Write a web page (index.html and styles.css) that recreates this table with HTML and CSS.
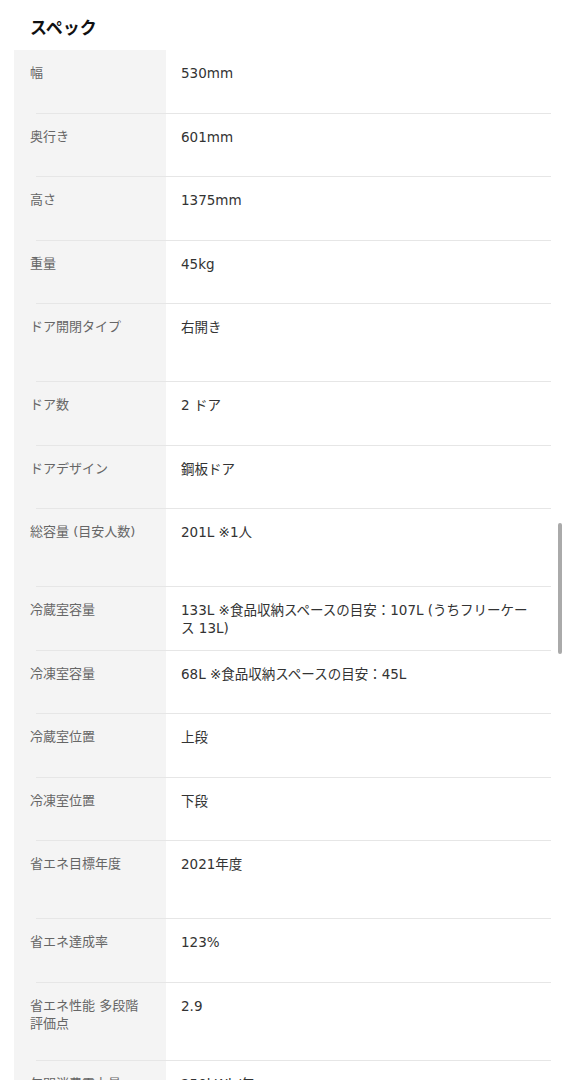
FILE: index.html
```html
<!DOCTYPE html>
<html lang="ja">
<head>
  <meta charset="UTF-8">
  <meta name="viewport" content="width=device-width, initial-scale=1.0">
  <title>スペック</title>
  <link rel="stylesheet" href="styles.css">
</head>
<body>
  <section class="spec">
    <h2 class="spec-title">スペック</h2>

    <div class="spec-list">
      <div class="spec-row">
        <div class="spec-label">幅</div>
        <div class="spec-value">530mm</div>
      </div>
      <div class="spec-row">
        <div class="spec-label">奥行き</div>
        <div class="spec-value">601mm</div>
      </div>
      <div class="spec-row">
        <div class="spec-label">高さ</div>
        <div class="spec-value">1375mm</div>
      </div>
      <div class="spec-row">
        <div class="spec-label">重量</div>
        <div class="spec-value">45kg</div>
      </div>
      <div class="spec-row tall">
        <div class="spec-label">ドア開閉タイプ</div>
        <div class="spec-value">右開き</div>
      </div>
      <div class="spec-row">
        <div class="spec-label">ドア数</div>
        <div class="spec-value">2 ドア</div>
      </div>
      <div class="spec-row">
        <div class="spec-label">ドアデザイン</div>
        <div class="spec-value">鋼板ドア</div>
      </div>
      <div class="spec-row tall">
        <div class="spec-label">総容量 (目安人数)</div>
        <div class="spec-value">201L ※1人</div>
      </div>
      <div class="spec-row">
        <div class="spec-label">冷蔵室容量</div>
        <div class="spec-value">133L ※食品収納スペースの目安：107L (うちフリーケース 13L)</div>
      </div>
      <div class="spec-row">
        <div class="spec-label">冷凍室容量</div>
        <div class="spec-value">68L ※食品収納スペースの目安：45L</div>
      </div>
      <div class="spec-row">
        <div class="spec-label">冷蔵室位置</div>
        <div class="spec-value">上段</div>
      </div>
      <div class="spec-row">
        <div class="spec-label">冷凍室位置</div>
        <div class="spec-value">下段</div>
      </div>
      <div class="spec-row tall">
        <div class="spec-label">省エネ目標年度</div>
        <div class="spec-value">2021年度</div>
      </div>
      <div class="spec-row">
        <div class="spec-label">省エネ達成率</div>
        <div class="spec-value">123%</div>
      </div>
      <div class="spec-row tall">
        <div class="spec-label">省エネ性能 多段階評価点</div>
        <div class="spec-value">2.9</div>
      </div>
      <div class="spec-row">
        <div class="spec-label">年間消費電力量</div>
        <div class="spec-value">250kWh/年</div>
      </div>
    </div>
  </section>

  <div class="scroll-thumb"></div>
</body>
</html>
```

FILE: styles.css
```css
body {
  margin: 0;
  background-color: #ffffff;
  color: #333333;
  font-family: "DejaVu Sans", "Noto Sans CJK JP", sans-serif;
  font-size: 13px;
}
.spec-title {
  margin: 0;
  padding: 15px 16px 11px 30px;
  font-family: "Noto Sans CJK JP", sans-serif;
  font-size: 17px;
  line-height: 24px;
  font-weight: bold;
  color: #111111;
}
.spec-list {
  margin: 0 16px 0 14px;
}
.spec-row {
  position: relative;
  display: grid;
  grid-template-columns: 152px 1fr;
  min-height: 63.5px;
  box-sizing: border-box;
  line-height: 18px;
}
.spec-row.tall {
  min-height: 78px;
}
.spec-row::after {
  content: "";
  position: absolute;
  left: 22px;
  right: 0;
  bottom: 0;
  height: 1px;
  background-color: #e6e6e6;
}
.spec-label {
  background-color: #f4f4f4;
  color: #666666;
  padding: 14px 20px 0 16px;
}
.spec-value {
  padding: 14px 16px 0 15px;
  font-size: 13.5px;
}
.scroll-thumb {
  position: fixed;
  top: 523px;
  right: 5px;
  width: 4px;
  height: 131px;
  border-radius: 2px;
  background-color: #aaaaaa;
}
```
